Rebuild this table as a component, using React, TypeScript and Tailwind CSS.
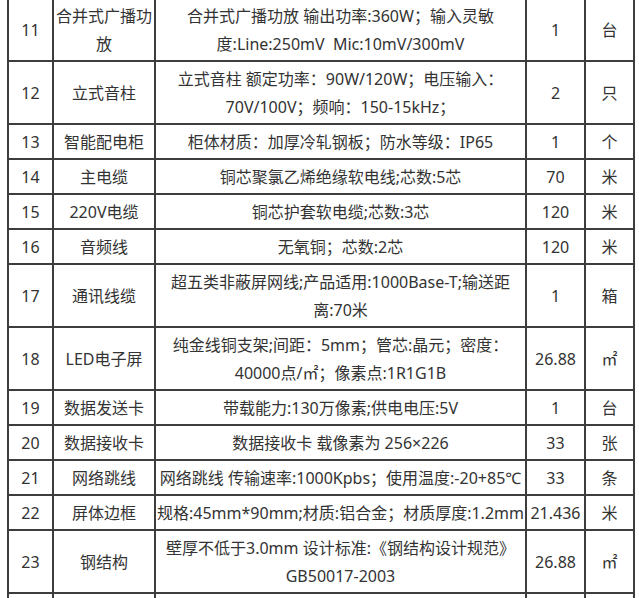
import React from "react";

type Row = {
  no: string;
  name: React.ReactNode;
  spec: React.ReactNode;
  qty: string;
  unit: string;
  tall?: boolean;
};

const rows: Row[] = [
  {
    no: "11",
    name: (
      <>
        合并式广播功
        <br />放
      </>
    ),
    spec: (
      <>
        合并式广播功放 输出功率:360W；输入灵敏
        <br />
        度:Line:250mV&nbsp; Mic:10mV/300mV
      </>
    ),
    qty: "1",
    unit: "台",
    tall: true,
  },
  {
    no: "12",
    name: "立式音柱",
    spec: (
      <>
        立式音柱 额定功率：90W/120W；电压输入：
        <br />
        70V/100V；频响：150-15kHz；
      </>
    ),
    qty: "2",
    unit: "只",
    tall: true,
  },
  { no: "13", name: "智能配电柜", spec: "柜体材质：加厚冷轧钢板；防水等级：IP65", qty: "1", unit: "个" },
  { no: "14", name: "主电缆", spec: "铜芯聚氯乙烯绝缘软电线;芯数:5芯", qty: "70", unit: "米" },
  { no: "15", name: "220V电缆", spec: "铜芯护套软电缆;芯数:3芯", qty: "120", unit: "米" },
  { no: "16", name: "音频线", spec: "无氧铜；芯数:2芯", qty: "120", unit: "米" },
  {
    no: "17",
    name: "通讯线缆",
    spec: (
      <>
        超五类非蔽屏网线;产品适用:1000Base-T;输送距
        <br />
        离:70米
      </>
    ),
    qty: "1",
    unit: "箱",
    tall: true,
  },
  {
    no: "18",
    name: "LED电子屏",
    spec: (
      <>
        纯金线铜支架;间距：5mm；管芯:晶元；密度：
        <br />
        40000点/㎡；像素点:1R1G1B
      </>
    ),
    qty: "26.88",
    unit: "㎡",
    tall: true,
  },
  { no: "19", name: "数据发送卡", spec: "带载能力:130万像素;供电电压:5V", qty: "1", unit: "台" },
  { no: "20", name: "数据接收卡", spec: "数据接收卡 载像素为 256×226", qty: "33", unit: "张" },
  { no: "21", name: "网络跳线", spec: "网络跳线 传输速率:1000Kpbs；使用温度:-20+85℃", qty: "33", unit: "条" },
  { no: "22", name: "屏体边框", spec: "规格:45mm*90mm;材质:铝合金；材质厚度:1.2mm", qty: "21.436", unit: "米" },
  {
    no: "23",
    name: "钢结构",
    spec: (
      <>
        壁厚不低于3.0mm 设计标准:《钢结构设计规范》
        <br />
        GB50017-2003
      </>
    ),
    qty: "26.88",
    unit: "㎡",
    tall: true,
  },
  { no: "", name: "", spec: "", qty: "", unit: "" },
];

// 单元格：左、上边框，由容器补右、下边框
function Cell({ tall, children }: { tall?: boolean; children: React.ReactNode }) {
  return (
    <div
      className={
        (tall ? "h-[63px] " : "h-[35px] ") +
        "border-l-2 border-t-2 border-[#3d3d3d] flex items-center justify-center text-center whitespace-nowrap"
      }
    >
      <div className="pt-px">{children}</div>
    </div>
  );
}

export default function App() {
  return (
    <div
      className="bg-white w-[639px] h-[598px] overflow-hidden text-[16px] leading-[28px] text-[#333]"
      style={{ fontFamily: '"Noto Sans", "Noto Sans CJK SC", sans-serif' }}
    >
      <div className="ml-[7px] -mt-[3px] w-max grid grid-cols-[45px_102px_371px_59px_49px] border-r-2 border-b-2 border-[#3d3d3d]">
        {rows.map((r, i) => (
          <React.Fragment key={i}>
            <Cell tall={r.tall}>{r.no}</Cell>
            <Cell tall={r.tall}>{r.name}</Cell>
            <Cell tall={r.tall}>{r.spec}</Cell>
            <Cell tall={r.tall}>{r.qty}</Cell>
            <Cell tall={r.tall}>{r.unit}</Cell>
          </React.Fragment>
        ))}
      </div>
    </div>
  );
}
